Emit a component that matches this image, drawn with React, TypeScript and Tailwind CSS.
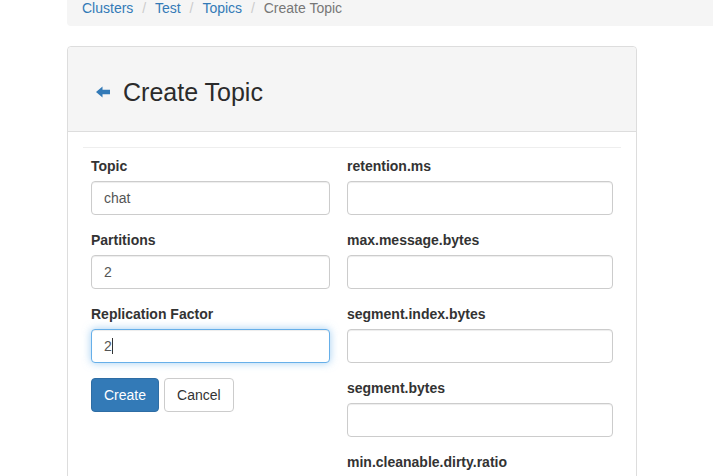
import React from 'react';

const font = { fontFamily: '"Liberation Sans", Arial, Helvetica, sans-serif' };

function Crumbs() {
  const items = ['Clusters', 'Test', 'Topics'];
  return (
    <div className="ml-[67px] -mt-[10px] h-[36px] w-[700px] rounded-[4px] bg-[#f5f5f5] px-[15px] py-[8px] text-[14px] leading-[20px]">
      {items.map((item) => (
        <span key={item}>
          <a className="text-[#337ab7]">{item}</a>{' '}
          <span className="px-[5px] text-[#ccc]">/{'\u00a0'}</span>
        </span>
      ))}
      <span className="text-[#777]">Create Topic</span>
    </div>
  );
}

function Field({ label, value }: { label: string; value?: string }) {
  return (
    <div className="mb-[15px]">
      <label className="mb-[5px] block text-[14px] font-bold leading-[20px] text-[#333]">{label}</label>
      <input
        readOnly
        value={value ?? ''}
        className="block h-[34px] w-full rounded-[4px] border border-[#ccc] bg-white px-[12px] py-[6px] text-[14px] leading-[20px] text-[#555] shadow-[inset_0_1px_1px_rgba(0,0,0,0.075)] outline-none"
        style={font}
      />
    </div>
  );
}

function FocusedField({ label, value }: { label: string; value: string }) {
  return (
    <div className="mb-[15px]">
      <label className="mb-[5px] block text-[14px] font-bold leading-[20px] text-[#333]">{label}</label>
      <div className="flex h-[34px] w-full items-center rounded-[4px] border border-[#66afe9] bg-white px-[12px] text-[14px] leading-[20px] text-[#555] shadow-[inset_0_1px_1px_rgba(0,0,0,0.075),0_0_8px_rgba(102,175,233,0.6)]">
        <span>{value}</span>
        <span className="h-[16px] w-px bg-[#333]" />
      </div>
    </div>
  );
}

function BackArrow() {
  return (
    <svg width="15" height="12" viewBox="0 0 15 12" className="shrink-0">
      <path d="M0 6 L6.5 0.5 L6.5 3.8 L14 3.8 L14 8.2 L6.5 8.2 L6.5 11.5 Z" fill="#337ab7" />
    </svg>
  );
}

export default function App() {
  return (
    <div className="h-[476px] w-[713px] overflow-hidden bg-white text-[#333]" style={font}>
      <Crumbs />

      <div className="ml-[67px] mt-[20px] w-[570px] rounded-[4px] border border-[#ddd] bg-white">
        <div className="flex h-[85px] items-center gap-[12px] rounded-t-[4px] border-b border-[#ddd] bg-[#f5f5f5] pl-[28px] pt-[6px]">
          <BackArrow />
          <h3 className="text-[25px] font-medium leading-[26px] text-[#2b2b2b]">Create Topic</h3>
        </div>

        <div className="p-[15px]">
          <hr className="mb-[8px] border-t border-[#eee]" />
          <div className="flex gap-[17px] pl-[8px]">
            <div className="w-[239px]">
              <Field label="Topic" value="chat" />
              <Field label="Partitions" value="2" />
              <FocusedField label="Replication Factor" value="2" />
              <div className="flex gap-[5px]">
                <button className="h-[34px] rounded-[4px] border border-[#2e6da4] bg-[#337ab7] px-[12px] text-[14px] text-white">
                  Create
                </button>
                <button className="h-[34px] rounded-[4px] border border-[#ccc] bg-white px-[12px] text-[14px] text-[#333]">
                  Cancel
                </button>
              </div>
            </div>
            <div className="w-[266px]">
              <Field label="retention.ms" />
              <Field label="max.message.bytes" />
              <Field label="segment.index.bytes" />
              <Field label="segment.bytes" />
              <Field label="min.cleanable.dirty.ratio" />
            </div>
          </div>
        </div>
      </div>
    </div>
  );
}
